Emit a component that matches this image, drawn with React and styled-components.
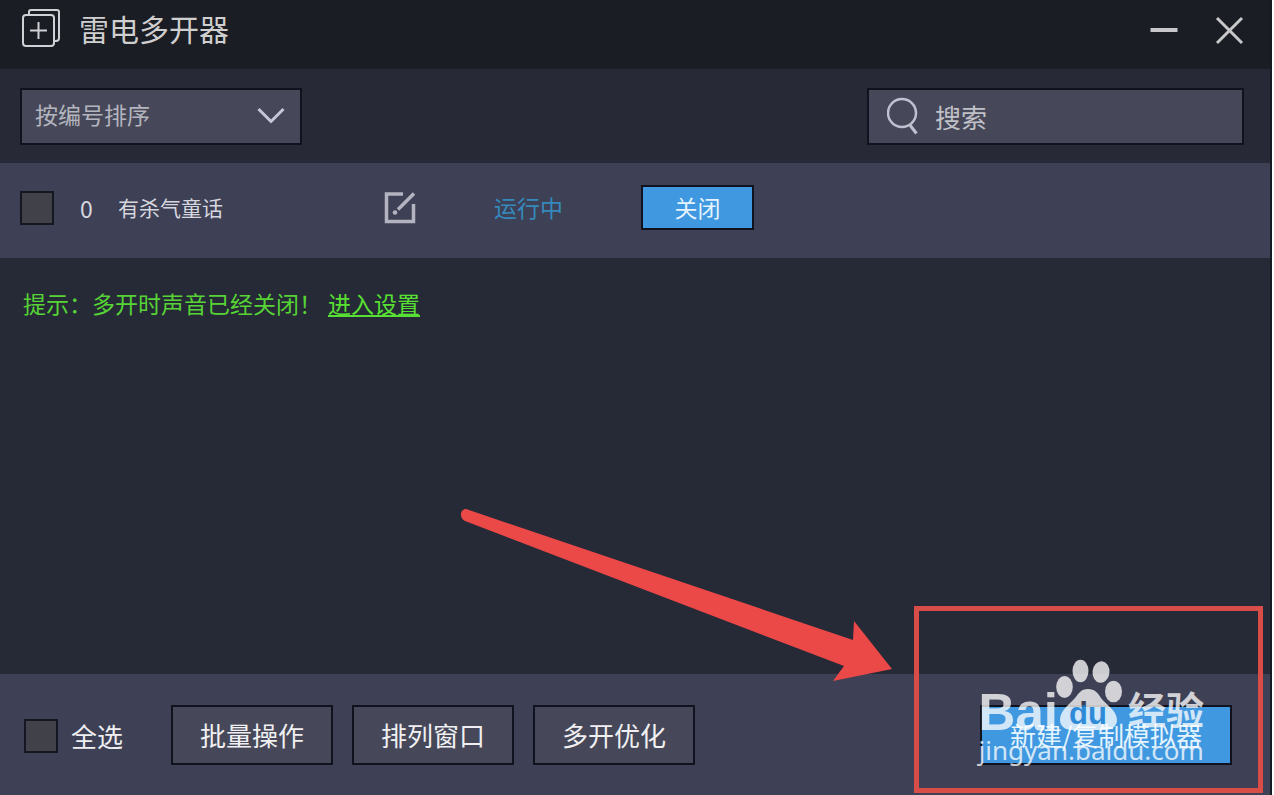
import React, { useState } from 'react';
import styled, { createGlobalStyle, css } from 'styled-components';

const GlobalStyle = createGlobalStyle`
  * {
    box-sizing: border-box;
  }
  body {
    margin: 0;
    background: #fff;
    font-family: "Noto Sans CJK SC", sans-serif;
  }
  button, input, select {
    font-family: inherit;
  }
`

const Window = styled.main`
  position: relative;
  display: flex;
  flex-direction: column;
  min-height: 100vh;
  margin-right: 2px;
  border-right: 2px solid #171923;
  background: #262936;
  overflow: hidden;
`

const TitleBar = styled.header`
  display: flex;
  align-items: center;
  height: 69px;
  padding: 0 26px 12px 20px;
  background: #1b1d24;
`

const Title = styled.h1`
  flex: 1;
  margin: 0 0 0 18px;
  padding-bottom: 2px;
  color: #cfcfcf;
  font-size: 30px;
  line-height: 40px;
  font-weight: 400;
`

const IconButton = styled.button`
  display: flex;
  padding: 0;
  border: 0;
  background: none;
  cursor: pointer;
`

const WindowControls = styled.div`
  display: flex;
  gap: 34px;
  padding-top: 2px;
`

const Toolbar = styled.div`
  display: flex;
  justify-content: space-between;
  align-items: center;
  height: 94px;
  padding: 0 26px 0 20px;
  background: #272936;
`

const field = css`
  height: 57px;
  border: 2px solid #10121e;
  background: #464859;
`

const SortBox = styled.div`
  display: grid;
  align-items: center;
  width: 282px;
  > * {
    grid-area: 1 / 1;
  }
  svg {
    justify-self: end;
    margin-right: 17px;
    pointer-events: none;
  }
`

const SortSelect = styled.select`
  ${field}
  width: 100%;
  padding: 0 50px 4px 13px;
  border-radius: 0;
  appearance: none;
  color: #b4b5be;
  font-size: 23px;
`

const SearchBox = styled.label`
  ${field}
  display: flex;
  align-items: center;
  gap: 15px;
  width: 377px;
  padding: 0 16px 0 18px;
`

const SearchInput = styled.input`
  flex: 1;
  min-width: 0;
  padding: 2px 0 0;
  border: 0;
  outline: 0;
  background: none;
  color: #c0c1c8;
  font-size: 26px;
  line-height: 40px;
  &::placeholder {
    color: #c0c1c8;
    opacity: 1;
  }
`

const List = styled.ul`
  margin: 0;
  padding: 0;
  list-style: none;
`

const Row = styled.li`
  display: grid;
  grid-template-columns: 60px 38px 265px 111px 147px 113px;
  align-items: center;
  height: 95px;
  padding: 0 20px 6px;
  background: #3e4056;
  color: #d6d7de;
  font-size: 21px;
  line-height: 30px;
`

const Index = styled.span`
  font-size: 23px;
`

const Name = styled.span`
  padding-bottom: 2px;
`

const Status = styled.span`
  padding-bottom: 2px;
  color: #3589bd;
  font-size: 23px;
`

const Checkbox = styled.input`
  flex: none;
  width: 34px;
  height: 34px;
  margin: 0;
  appearance: none;
  border: 2px solid #151722;
  background: #414149;
  &:checked {
    background: #3f98e3;
  }
`

const Button = styled.button`
  height: 60px;
  padding: 0 27px;
  border: 2px solid #10121e;
  background: #464859;
  color: #f0f0f2;
  font-size: 26px;
  line-height: 40px;
  white-space: nowrap;
  cursor: pointer;
  ${({$primary}) => $primary && css`
    background: #3f98e0;
    color: #e4f4ff;
  `}
  ${({$small}) => $small && css`
    height: 45px;
    padding: 0 0 2px;
    font-size: 23px;
    line-height: 34px;
  `}
`

const Content = styled.section`
  flex: 1;
  padding: 28px 23px;
`

const Tip = styled.p`
  display: flex;
  flex-wrap: wrap;
  gap: 6px;
  margin: 0;
  color: #57d435;
  font-size: 23px;
  line-height: 34px;
`

const TipLink = styled.a`
  color: #57e033;
  text-underline-offset: 2px;
`

const Footer = styled.footer`
  display: flex;
  align-items: center;
  justify-content: space-between;
  height: 121px;
  padding: 0 38px 0 24px;
  background: #3e4056;
`

const Actions = styled.div`
  display: flex;
  align-items: center;
  gap: 19px;
`

const SelectAll = styled.label`
  display: flex;
  align-items: center;
  gap: 13px;
  margin-right: 29px;
  padding-top: 3px;
  color: #f0f0f2;
  font-size: 26px;
  line-height: 40px;
`

const CreateButton = styled(Button)`
  min-width: 252px;
`

const Arrow = styled.svg`
  position: absolute;
  right: 376px;
  bottom: 111px;
  pointer-events: none;
`

const Highlight = styled.div`
  position: absolute;
  right: 7px;
  bottom: 2px;
  width: 349px;
  height: 187px;
  border: 5px solid #d94d48;
  pointer-events: none;
`

const Watermark = styled.div`
  position: absolute;
  right: 66px;
  bottom: 29px;
  color: #fff;
  opacity: 0.76;
  pointer-events: none;
`

const Brand = styled.div`
  display: flex;
  align-items: flex-end;
  margin-bottom: 3px;
`

const BrandLatin = styled.span`
  margin-right: -3px;
  font-family: "Liberation Sans", sans-serif;
  font-size: 51px;
  font-weight: 700;
  line-height: 36px;
`

const BrandChinese = styled.span`
  margin-left: 5px;
  font-size: 38px;
  font-weight: 700;
  line-height: 46px;
`

const Site = styled.div`
  font-family: "Noto Sans", sans-serif;
  font-size: 26px;
  line-height: 32px;
`

const instances = [
  { id: 0, name: '有杀气童话', status: '运行中' },
];

const actions = ['批量操作', '排列窗口', '多开优化'];

function AppIcon() {
  return (
    <svg width="41" height="40" viewBox="0 0 41 40" fill="none" stroke="#d0d1d4" strokeWidth="2" aria-hidden="true">
      <rect x="3" y="6" width="31" height="31" rx="3" />
      <path d="M9 6V3q0-2 2-2h26q2 0 2 2v26q0 3-3 3h-2M18.500 13v17M10 21.500h17" />
    </svg>
  );
}

function EditIcon() {
  return (
    <svg width="33" height="33" viewBox="0 0 33 33" fill="none" stroke="#b3b4bf" strokeWidth="3.500" aria-hidden="true">
      <path d="M20 3H3.500v27.500h27V13M31 2.500L15 18.500" />
      <circle cx="12" cy="21.500" r="2.300" fill="#b3b4bf" stroke="none" />
    </svg>
  );
}

function SearchIcon() {
  return (
    <svg width="33" height="38" viewBox="0 0 33 38" fill="none" stroke="#c0c1d0" strokeWidth="2.500" aria-hidden="true">
      <circle cx="15" cy="16" r="14" />
      <path d="M22.500 27.500l7 9" strokeWidth="3" />
    </svg>
  );
}

function Paw() {
  return (
    <svg width="68" height="72" viewBox="0 0 68 72" fill="#fff">
      <defs>
        <linearGradient id="letters" gradientUnits="userSpaceOnUse" x1="0" y1="0" x2="0" y2="72">
          <stop offset="0.645" stopColor="#3e4056" />
          <stop offset="0.645" stopColor="#2b88d6" />
        </linearGradient>
      </defs>
      <ellipse cx="9.500" cy="28" rx="8.300" ry="11" />
      <ellipse cx="25.500" cy="12" rx="8" ry="11.300" />
      <ellipse cx="46" cy="13" rx="8.500" ry="10.800" transform="rotate(6 46 13)" />
      <ellipse cx="58.500" cy="32.500" rx="8.500" ry="10.800" />
      <path d="M33 30c7 0 10 4 13 9 4 6 16 12 16 22 0 6-5 10-12 10H17C10 71 5 67 5 61c0-10 10-16 15-22 4-5 6-9 13-9z" />
      <text x="14" y="65" fill="url(#letters)" fontFamily="Liberation Sans, sans-serif" fontWeight="700" fontSize="31">du</text>
    </svg>
  );
}

export default function App() {
  const [search, setSearch] = useState('');

  return (
    <>
      <GlobalStyle />
      <Window>
        <TitleBar>
          <AppIcon />
          <Title>雷电多开器</Title>
          <WindowControls>
            <IconButton aria-label="最小化">
              <svg width="32" height="32" viewBox="0 0 32 32" stroke="#c8c8ca" strokeWidth="4">
                <path d="M2.500 16h27" />
              </svg>
            </IconButton>
            <IconButton aria-label="关闭窗口">
              <svg width="30" height="32" viewBox="0 0 30 32" stroke="#c8c8ca" strokeWidth="3">
                <path d="M3 4l25 25M28 4L3 29" />
              </svg>
            </IconButton>
          </WindowControls>
        </TitleBar>
        <Toolbar>
          <SortBox>
            <SortSelect aria-label="排序">
              <option>按编号排序</option>
            </SortSelect>
            <svg width="28" height="18" viewBox="0 0 28 18" fill="none" stroke="#c6c7d8" strokeWidth="3">
              <path d="M1.500 2L14 14.500 26.500 2" />
            </svg>
          </SortBox>
          <SearchBox>
            <SearchIcon />
            <SearchInput
              aria-label="搜索"
              placeholder="搜索"
              value={search}
              onChange={(e) => setSearch(e.target.value)}
            />
          </SearchBox>
        </Toolbar>
        <List>
          {instances.map(({ id, name, status }) => (
            <Row key={id}>
              <Checkbox type="checkbox" aria-label={name} />
              <Index>{id}</Index>
              <Name>{name}</Name>
              <IconButton aria-label="重命名">
                <EditIcon />
              </IconButton>
              <Status>{status}</Status>
              <Button $primary $small>关闭</Button>
            </Row>
          ))}
        </List>
        <Content>
          <Tip>
            <span>提示：多开时声音已经关闭！</span>
            <TipLink href="#settings">进入设置</TipLink>
          </Tip>
        </Content>
        <Footer>
          <Actions>
            <SelectAll>
              <Checkbox type="checkbox" />
              全选
            </SelectAll>
            {actions.map((label) => (
              <Button key={label}>{label}</Button>
            ))}
          </Actions>
          <CreateButton $primary>新建/复制模拟器</CreateButton>
        </Footer>
        <Arrow width="434" height="176" viewBox="0 0 434 176" fill="#eb4848" aria-hidden="true">
          <path d="M6 1L393 132 394 113 432 161 373 173 384 158 5 13C-1 10 0 1 6 1z" />
        </Arrow>
        <Highlight />
        <Watermark>
          <Brand>
            <BrandLatin>Bai</BrandLatin>
            <Paw />
            <BrandChinese>经验</BrandChinese>
          </Brand>
          <Site>jingyan.baidu.com</Site>
        </Watermark>
      </Window>
    </>
  );
}
